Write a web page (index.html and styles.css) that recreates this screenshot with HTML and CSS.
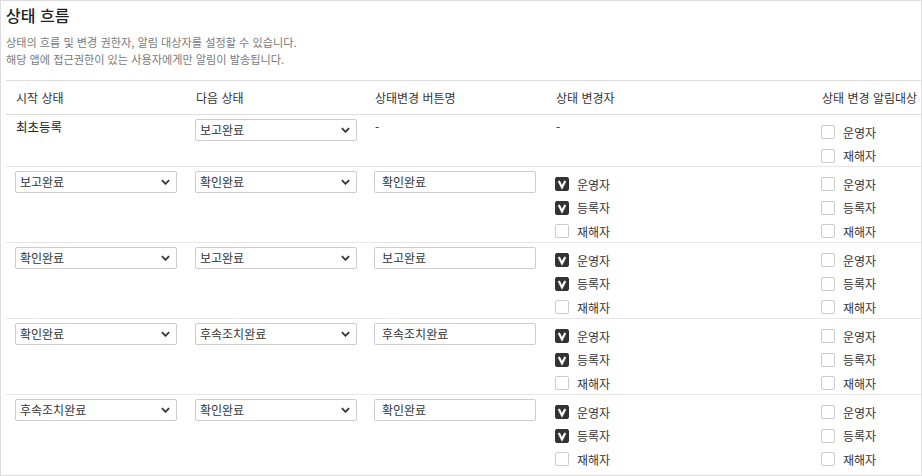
FILE: index.html
```html
<!DOCTYPE html>
<html lang="ko">
<head>
<meta charset="utf-8">
<link rel="stylesheet" href="styles.css">
</head>
<body>
<div class="panel">
  <h2 class="title">상태 흐름</h2>
  <p class="desc">상태의 흐름 및 변경 권한자, 알림 대상자를 설정할 수 있습니다.<br>해당 앱에 접근권한이 있는 사용자에게만 알림이 발송됩니다.</p>
  <div class="table">
    <div class="row head">
      <div class="cell">시작 상태</div>
      <div class="cell">다음 상태</div>
      <div class="cell">상태변경 버튼명</div>
      <div class="cell">상태 변경자</div>
      <div class="cell">상태 변경 알림대상</div>
    </div>

    <div class="row first">
      <div class="cell"><span class="plain strong">최초등록</span></div>
      <div class="cell"><div class="select">보고완료<svg class="chev" viewBox="0 0 10 6"><path d="M1 1 L5 5 L9 1"/></svg></div></div>
      <div class="cell"><span class="plain">-</span></div>
      <div class="cell"><span class="plain">-</span></div>
      <div class="cell">
        <ul class="checks">
          <li><span class="box"></span>운영자</li>
          <li><span class="box"></span>재해자</li>
        </ul>
      </div>
    </div>

    <div class="row">
      <div class="cell"><div class="select">보고완료<svg class="chev" viewBox="0 0 10 6"><path d="M1 1 L5 5 L9 1"/></svg></div></div>
      <div class="cell"><div class="select">확인완료<svg class="chev" viewBox="0 0 10 6"><path d="M1 1 L5 5 L9 1"/></svg></div></div>
      <div class="cell"><div class="input">확인완료</div></div>
      <div class="cell">
        <ul class="checks">
          <li><span class="box on"><svg viewBox="0 0 14 14"><path d="M3.2 3.4 L7 10.8 L10.8 3.4"/></svg></span>운영자</li>
          <li><span class="box on"><svg viewBox="0 0 14 14"><path d="M3.2 3.4 L7 10.8 L10.8 3.4"/></svg></span>등록자</li>
          <li><span class="box"></span>재해자</li>
        </ul>
      </div>
      <div class="cell">
        <ul class="checks">
          <li><span class="box"></span>운영자</li>
          <li><span class="box"></span>등록자</li>
          <li><span class="box"></span>재해자</li>
        </ul>
      </div>
    </div>

    <div class="row">
      <div class="cell"><div class="select">확인완료<svg class="chev" viewBox="0 0 10 6"><path d="M1 1 L5 5 L9 1"/></svg></div></div>
      <div class="cell"><div class="select">보고완료<svg class="chev" viewBox="0 0 10 6"><path d="M1 1 L5 5 L9 1"/></svg></div></div>
      <div class="cell"><div class="input">보고완료</div></div>
      <div class="cell">
        <ul class="checks">
          <li><span class="box on"><svg viewBox="0 0 14 14"><path d="M3.2 3.4 L7 10.8 L10.8 3.4"/></svg></span>운영자</li>
          <li><span class="box on"><svg viewBox="0 0 14 14"><path d="M3.2 3.4 L7 10.8 L10.8 3.4"/></svg></span>등록자</li>
          <li><span class="box"></span>재해자</li>
        </ul>
      </div>
      <div class="cell">
        <ul class="checks">
          <li><span class="box"></span>운영자</li>
          <li><span class="box"></span>등록자</li>
          <li><span class="box"></span>재해자</li>
        </ul>
      </div>
    </div>

    <div class="row">
      <div class="cell"><div class="select">확인완료<svg class="chev" viewBox="0 0 10 6"><path d="M1 1 L5 5 L9 1"/></svg></div></div>
      <div class="cell"><div class="select">후속조치완료<svg class="chev" viewBox="0 0 10 6"><path d="M1 1 L5 5 L9 1"/></svg></div></div>
      <div class="cell"><div class="input">후속조치완료</div></div>
      <div class="cell">
        <ul class="checks">
          <li><span class="box on"><svg viewBox="0 0 14 14"><path d="M3.2 3.4 L7 10.8 L10.8 3.4"/></svg></span>운영자</li>
          <li><span class="box on"><svg viewBox="0 0 14 14"><path d="M3.2 3.4 L7 10.8 L10.8 3.4"/></svg></span>등록자</li>
          <li><span class="box"></span>재해자</li>
        </ul>
      </div>
      <div class="cell">
        <ul class="checks">
          <li><span class="box"></span>운영자</li>
          <li><span class="box"></span>등록자</li>
          <li><span class="box"></span>재해자</li>
        </ul>
      </div>
    </div>

    <div class="row">
      <div class="cell"><div class="select">후속조치완료<svg class="chev" viewBox="0 0 10 6"><path d="M1 1 L5 5 L9 1"/></svg></div></div>
      <div class="cell"><div class="select">확인완료<svg class="chev" viewBox="0 0 10 6"><path d="M1 1 L5 5 L9 1"/></svg></div></div>
      <div class="cell"><div class="input">확인완료</div></div>
      <div class="cell">
        <ul class="checks">
          <li><span class="box on"><svg viewBox="0 0 14 14"><path d="M3.2 3.4 L7 10.8 L10.8 3.4"/></svg></span>운영자</li>
          <li><span class="box on"><svg viewBox="0 0 14 14"><path d="M3.2 3.4 L7 10.8 L10.8 3.4"/></svg></span>등록자</li>
          <li><span class="box"></span>재해자</li>
        </ul>
      </div>
      <div class="cell">
        <ul class="checks">
          <li><span class="box"></span>운영자</li>
          <li><span class="box"></span>등록자</li>
          <li><span class="box"></span>재해자</li>
        </ul>
      </div>
    </div>
  </div>
</div>
</body>
</html>
```

FILE: styles.css
```css
* { box-sizing: border-box; }
html, body { margin: 0; padding: 0; background: #fff; }
body {
  font-family: "Noto Sans CJK KR", "Noto Sans", sans-serif;
  font-size: 12px;
  color: #333;
}
.panel {
  width: 922px;
  height: 476px;
  border: 1px solid #ddd;
  padding: 3px 0 0 5px;
  overflow: hidden;
}
.title {
  margin: 0;
  font-size: 16px;
  line-height: 22px;
  font-weight: 500;
  color: #222;
}
.desc {
  margin: 7.5px 0 0;
  font-size: 11.15px;
  line-height: 17px;
  color: #7a7a7a;
}
.table {
  margin-top: 12.5px;
  border-top: 1px solid #ddd;
}
.row {
  display: grid;
  grid-template-columns: 180px 179px 181px 266px 109px;
  height: 76px;
  border-bottom: 1px solid #e6e6e6;
}
.row:last-child { border-bottom: none; }
.row.head {
  height: 34px;
  border-bottom: 1px solid #ddd;
  align-items: center;
}
.row.first { height: 52px; }
.cell {
  padding: 4px 0 0 9px;
}
.row.head .cell { padding: 0 0 0 10px; }
.plain {
  display: block;
  line-height: 16px;
  padding-left: 1px;
}
.plain.strong { color: #222; font-size: 12.5px; }
.select, .input {
  width: 162px;
  height: 22px;
  border: 1px solid #ccc;
  border-radius: 2px;
  padding: 0 0 0 4px;
  line-height: 20px;
  color: #333;
  display: flex;
  align-items: center;
  justify-content: space-between;
}
.input { padding-left: 7px; }
.chev {
  width: 9px;
  height: 6px;
  margin-right: 6px;
  fill: none;
  stroke: #333;
  stroke-width: 2;
}
.checks {
  list-style: none;
  margin: 0;
  padding: 1.5px 0 0;
}
.checks li {
  height: 23.5px;
  display: flex;
  align-items: center;
  gap: 8px;
}
.box {
  width: 14px;
  height: 14px;
  border: 1px solid #ccc;
  border-radius: 2px;
  background: #fff;
  display: inline-block;
  flex: none;
}
.box.on {
  background: #333;
  border-color: #333;
}
.box svg {
  display: block;
  width: 12px;
  height: 12px;
  fill: none;
  stroke: #fff;
  stroke-width: 2.6;
  stroke-linejoin: miter;
}
```
